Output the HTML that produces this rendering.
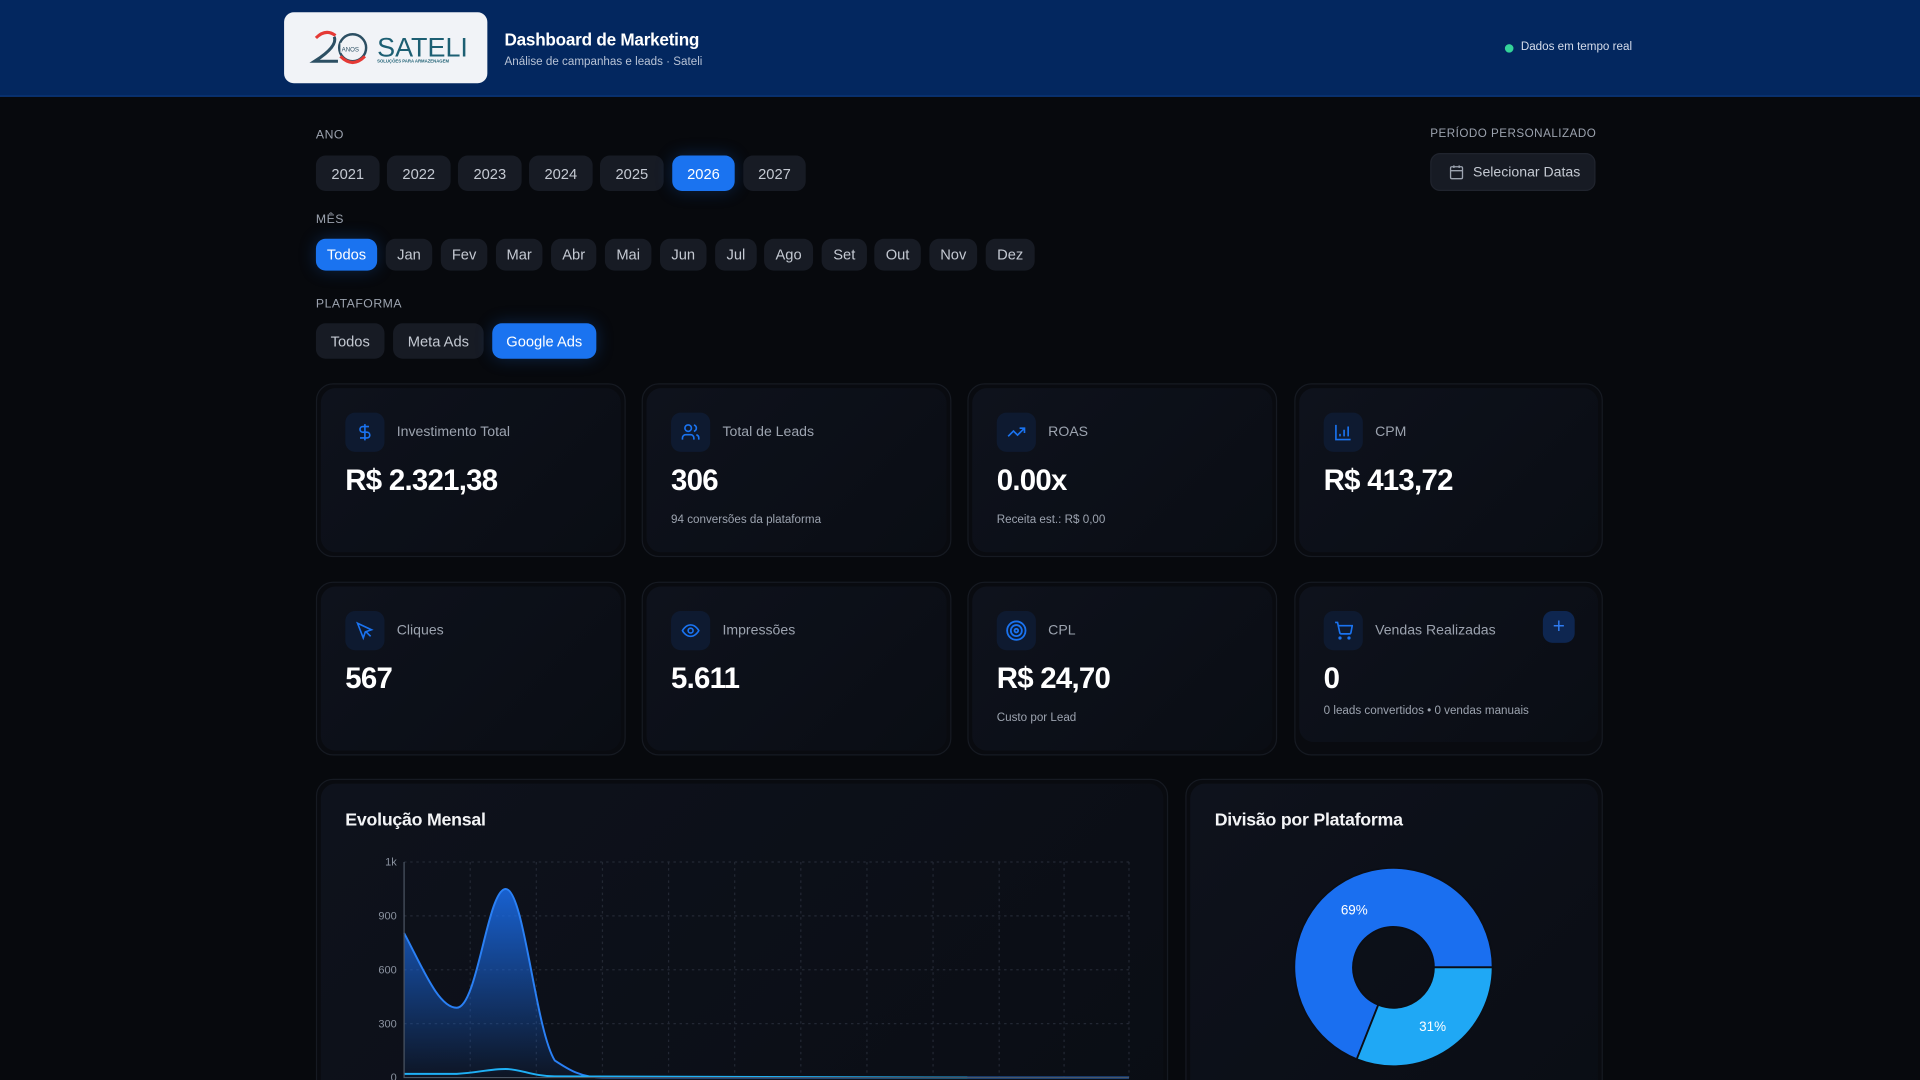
<!DOCTYPE html>
<html><head><meta charset="utf-8"><style>
*{box-sizing:border-box;margin:0;padding:0}
html,body{width:1920px;height:1080px;overflow:hidden;background:#07090d;font-family:"Liberation Sans",Arial,sans-serif}
#w{position:absolute;left:0;top:0;width:1568px;height:882px;transform:scale(1.22449);transform-origin:0 0;background:#07090d;overflow:hidden}
.a{position:absolute}
.hdr{left:0;top:0;width:1568px;height:79px;background:#03275f;border-bottom:1px solid #0c3a80}
.lbl{font-size:10px;color:#9ca3af;letter-spacing:.4px}
.btn{position:absolute;background:#171b24;color:#c4c9d2;font-size:12px;border-radius:8px;display:flex;align-items:center;justify-content:center}
.on{background:#1a73f0;color:#fff;box-shadow:0 0 14px rgba(26,115,240,.25)}
.card{position:absolute;border:1px solid #161a22;border-radius:14px;background:#090b10}
.in{position:absolute;left:3px;top:3px;right:3px;bottom:3px;border-radius:12px;background:linear-gradient(135deg,#0e121c,#0a0d14)}
.ic{position:absolute;left:20px;top:20px;width:32px;height:32px;border-radius:8px;background:#0e1a30;display:flex;align-items:center;justify-content:center}
.cl{position:absolute;left:62px;top:30px;font-size:11.5px;color:#9ca3af}
.cv{position:absolute;left:20px;top:62px;font-size:24px;font-weight:bold;color:#fff;letter-spacing:-.6px}
.cs{position:absolute;left:20px;top:102px;font-size:9.5px;color:#9ca3af}
</style></head><body><div id="w">
<div class="a hdr"></div>
<div class="a" style="left:232px;top:10px;width:166px;height:58px;background:#f1f3f7;border-radius:8px"></div>
<svg class="a" style="left:252px;top:22px" width="135" height="36" viewBox="0 0 135 36">
<path d="M6 9 Q14 1 22 7" stroke="#e53935" stroke-width="2.5" fill="none"/>
<path d="M21 8 Q24 16 5 28 L24 28" stroke="#2c4f63" stroke-width="2.5" fill="none"/>
<ellipse cx="36" cy="17" rx="11" ry="11" stroke="#2c4f63" stroke-width="2" fill="none"/>
<path d="M26 24 Q36 34 46 24" stroke="#e53935" stroke-width="2.5" fill="none"/>
<rect x="26" y="13" width="14" height="8" fill="#f1f3f7"/>
<text x="27" y="20" font-size="5" fill="#2c4f63" font-family="Liberation Sans">ANOS</text>
<text x="56" y="24" font-size="22" fill="#1d5f73" font-family="Liberation Sans">SATELI</text>
<text x="56" y="29" font-size="3.5" fill="#1d5f73" font-family="Liberation Sans" font-weight="bold">SOLUÇÕES PARA ARMAZENAGEM</text>
</svg>
<div class="a" style="left:412px;top:24px;font-size:14px;font-weight:bold;color:#fff;letter-spacing:-.2px">Dashboard de Marketing</div>
<div class="a" style="left:412px;top:45px;font-size:9.5px;color:#b8c3d6">Análise de campanhas e leads · Sateli</div>
<div class="a" style="left:1229px;top:36px;width:7px;height:7px;border-radius:50%;background:#34d399"></div>
<div class="a" style="left:1242px;top:33px;font-size:9.5px;color:#d5dceb">Dados em tempo real</div>

<div class="a lbl" style="left:258px;top:105px">ANO</div>
<div class="btn" style="left:258px;top:127px;width:52px;height:29px">2021</div>
<div class="btn" style="left:316px;top:127px;width:52px;height:29px">2022</div>
<div class="btn" style="left:374px;top:127px;width:52px;height:29px">2023</div>
<div class="btn" style="left:432px;top:127px;width:52px;height:29px">2024</div>
<div class="btn" style="left:490px;top:127px;width:52px;height:29px">2025</div>
<div class="btn on" style="left:549px;top:127px;width:51px;height:29px">2026</div>
<div class="btn" style="left:607px;top:127px;width:51px;height:29px">2027</div>

<div class="a lbl" style="left:258px;top:174px">MÊS</div>
<div class="btn on" style="left:258px;top:195px;width:50px;height:26px">Todos</div>
<div class="btn" style="left:315px;top:195px;width:38px;height:26px">Jan</div>
<div class="btn" style="left:360px;top:195px;width:38px;height:26px">Fev</div>
<div class="btn" style="left:405px;top:195px;width:38px;height:26px">Mar</div>
<div class="btn" style="left:450px;top:195px;width:37px;height:26px">Abr</div>
<div class="btn" style="left:494px;top:195px;width:38px;height:26px">Mai</div>
<div class="btn" style="left:539px;top:195px;width:38px;height:26px">Jun</div>
<div class="btn" style="left:584px;top:195px;width:34px;height:26px">Jul</div>
<div class="btn" style="left:624px;top:195px;width:40px;height:26px">Ago</div>
<div class="btn" style="left:671px;top:195px;width:37px;height:26px">Set</div>
<div class="btn" style="left:714px;top:195px;width:38px;height:26px">Out</div>
<div class="btn" style="left:759px;top:195px;width:39px;height:26px">Nov</div>
<div class="btn" style="left:805px;top:195px;width:40px;height:26px">Dez</div>

<div class="a lbl" style="left:258px;top:243px">PLATAFORMA</div>
<div class="btn" style="left:258px;top:264px;width:56px;height:29px">Todos</div>
<div class="btn" style="left:321px;top:264px;width:74px;height:29px">Meta Ads</div>
<div class="btn on" style="left:402px;top:264px;width:85px;height:29px">Google Ads</div>

<div class="a lbl" style="left:1168px;top:104px;font-size:9.5px">PERÍODO PERSONALIZADO</div>
<div class="btn" style="left:1168px;top:125px;width:135px;height:31px;border:1px solid #20242e;justify-content:flex-start;padding-left:14px">
<svg width="13" height="13" viewBox="0 0 24 24" fill="none" stroke="#9ca3af" stroke-width="2"><rect x="3" y="4" width="18" height="18" rx="2"/><path d="M16 2v4M8 2v4M3 10h18"/></svg><span style="margin-left:7px;font-size:11.5px">Selecionar Datas</span></div>

<!-- row1 -->
<div class="card" style="left:258px;top:313px;width:253px;height:142px"><div class="in">
<div class="ic"><svg width="16" height="16" viewBox="0 0 24 24" fill="none" stroke="#1a73f0" stroke-width="2"><path d="M12 2v20M17 5H9.5a3.5 3.5 0 0 0 0 7h5a3.5 3.5 0 0 1 0 7H6"/></svg></div>
<div class="cl">Investimento Total</div><div class="cv">R$ 2.321,38</div></div></div>
<div class="card" style="left:524px;top:313px;width:253px;height:142px"><div class="in">
<div class="ic"><svg width="16" height="16" viewBox="0 0 24 24" fill="none" stroke="#1a73f0" stroke-width="2"><path d="M16 21v-2a4 4 0 0 0-4-4H6a4 4 0 0 0-4 4v2"/><circle cx="9" cy="7" r="4"/><path d="M22 21v-2a4 4 0 0 0-3-3.87M16 3.13a4 4 0 0 1 0 7.75"/></svg></div>
<div class="cl">Total de Leads</div><div class="cv">306</div><div class="cs">94 conversões da plataforma</div></div></div>
<div class="card" style="left:790px;top:313px;width:253px;height:142px"><div class="in">
<div class="ic"><svg width="16" height="16" viewBox="0 0 24 24" fill="none" stroke="#1a73f0" stroke-width="2"><path d="M22 7l-8.5 8.5-5-5L2 17M16 7h6v6"/></svg></div>
<div class="cl">ROAS</div><div class="cv">0.00x</div><div class="cs">Receita est.: R$ 0,00</div></div></div>
<div class="card" style="left:1057px;top:313px;width:252px;height:142px"><div class="in">
<div class="ic"><svg width="16" height="16" viewBox="0 0 24 24" fill="none" stroke="#1a73f0" stroke-width="2"><path d="M3 3v18h18M8 17v-3M13 17V9M18 17V5"/></svg></div>
<div class="cl">CPM</div><div class="cv">R$ 413,72</div></div></div>

<!-- row2 -->
<div class="card" style="left:258px;top:475px;width:253px;height:142px"><div class="in">
<div class="ic"><svg width="16" height="16" viewBox="0 0 24 24" fill="none" stroke="#1a73f0" stroke-width="2"><path d="M3 3l7 18 2.5-7.5L20 11z M13 13l6 6"/></svg></div>
<div class="cl">Cliques</div><div class="cv">567</div></div></div>
<div class="card" style="left:524px;top:475px;width:253px;height:142px"><div class="in">
<div class="ic"><svg width="16" height="16" viewBox="0 0 24 24" fill="none" stroke="#1a73f0" stroke-width="2"><path d="M2 12s3.5-7 10-7 10 7 10 7-3.5 7-10 7S2 12 2 12z"/><circle cx="12" cy="12" r="3"/></svg></div>
<div class="cl">Impressões</div><div class="cv">5.611</div></div></div>
<div class="card" style="left:790px;top:475px;width:253px;height:142px"><div class="in">
<div class="ic"><svg width="18" height="18" viewBox="0 0 24 24" fill="none" stroke="#1a73f0" stroke-width="2"><circle cx="12" cy="12" r="10"/><circle cx="12" cy="12" r="6"/><circle cx="12" cy="12" r="2"/></svg></div>
<div class="cl">CPL</div><div class="cv">R$ 24,70</div><div class="cs">Custo por Lead</div></div></div>
<div class="card" style="left:1057px;top:475px;width:252px;height:142px"><div class="in" style="bottom:10px">
<div class="ic"><svg width="16" height="16" viewBox="0 0 24 24" fill="none" stroke="#1a73f0" stroke-width="2"><circle cx="8" cy="21" r="1"/><circle cx="19" cy="21" r="1"/><path d="M2 2h3l2.7 12.4a2 2 0 0 0 2 1.6h9.7a2 2 0 0 0 2-1.6L23 6H6"/></svg></div>
<div class="cl">Vendas Realizadas</div><div class="cv">0</div><div class="cs" style="top:96px">0 leads convertidos • 0 vendas manuais</div>
<div class="a" style="left:199px;top:20px;width:26px;height:26px;border-radius:8px;background:#0e2650;color:#2f7bf0;font-size:17px;display:flex;align-items:center;justify-content:center">+</div>
</div></div>

<!-- chart -->
<div class="card" style="left:258px;top:636px;width:696px;height:300px"><div class="in"></div></div>
<div class="a" style="left:282px;top:662px;font-size:14.5px;font-weight:bold;color:#f3f4f6;letter-spacing:-.2px">Evolução Mensal</div>
<svg class="a" style="left:0;top:0" width="1568" height="882">
<defs><linearGradient id="g" x1="0" y1="0" x2="0" y2="1"><stop offset="0" stop-color="#1a6ff0" stop-opacity=".85"/><stop offset="1" stop-color="#1a6ff0" stop-opacity=".05"/></linearGradient></defs>
<g stroke="#232834" stroke-dasharray="2 3" stroke-width="1">
<path d="M330 704H922M330 748H922M330 792H922M330 836H922"/>
<path d="M384 704V880M438 704V880M492 704V880M546 704V880M600 704V880M654 704V880M708 704V880M762 704V880M816 704V880M869 704V880M922 704V880"/>
</g>
<path d="M330 762 C345 790 358 823 373 823 C390 823 398 726 413 726 C428 726 437 840 453 866 C465 874 475 880 492 880 L922 880 L330 880Z" fill="url(#g)"/>
<path d="M330 762 C345 790 358 823 373 823 C390 823 398 726 413 726 C428 726 437 840 453 866 C465 874 475 880 492 880 L922 880" stroke="#2a80f5" stroke-width="1.6" fill="none"/>
<path d="M330 877 L373 877 C390 876 400 873 413 873 C425 873 435 879 453 879 L790 880" stroke="#1fb0f5" stroke-width="1.6" fill="none"/>
<path d="M330 704V880H922" stroke="#4b5563" stroke-width="1" fill="none"/>
<g font-size="9" fill="#8b93a0" text-anchor="end" font-family="Liberation Sans"><text x="324" y="707">1k</text><text x="324" y="751">900</text><text x="324" y="795">600</text><text x="324" y="839">300</text><text x="324" y="883">0</text></g>
</svg>

<!-- pie -->
<div class="card" style="left:968px;top:636px;width:341px;height:300px"><div class="in"></div></div>
<div class="a" style="left:992px;top:662px;font-size:14.5px;font-weight:bold;color:#f3f4f6;letter-spacing:-.2px">Divisão por Plataforma</div>
<svg class="a" style="left:0;top:0" width="1568" height="882">
<path d="M1219 790 A81 81 0 1 0 1108 865 L1125.6 820.6 A33 33 0 1 1 1171 790Z" fill="#1a6ff0" stroke="#0b0e15" stroke-width="1.5"/>
<path d="M1219 790 A81 81 0 0 1 1108 865 L1125.6 820.6 A33 33 0 0 0 1171 790Z" fill="#1fa8f5" stroke="#0b0e15" stroke-width="1.5"/>
<text x="1106" y="747" font-size="11" fill="#fff" text-anchor="middle" font-family="Liberation Sans">69%</text>
<text x="1170" y="842" font-size="11" fill="#fff" text-anchor="middle" font-family="Liberation Sans">31%</text>
</svg>
</div></body></html>
